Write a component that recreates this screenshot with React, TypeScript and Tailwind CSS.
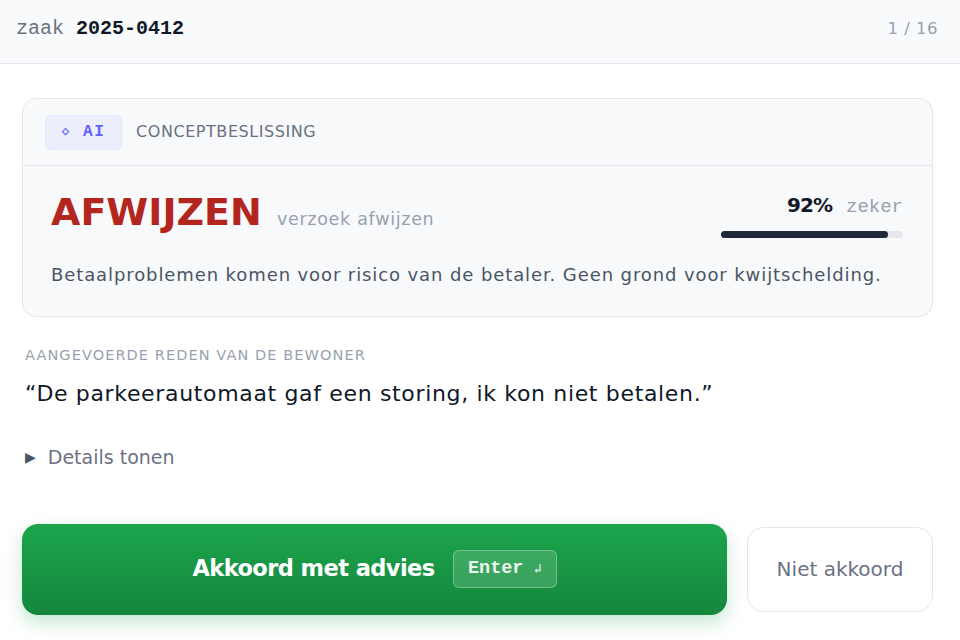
import React from "react";

const sans = "font-['DejaVu_Sans','Noto_Sans',sans-serif]";
const mono = "font-['Liberation_Mono','DejaVu_Sans_Mono',monospace]";

export default function App() {
  return (
    <div className={`h-[640px] w-[960px] overflow-hidden bg-white ${sans}`}>
      <header className="flex h-[64px] items-center justify-between border-b border-gray-200 bg-[#f9fafb] pb-[5px] pl-4 pr-[22px]">
        <div className={`${mono} text-[20px] text-gray-500`}>
          zaak <span className="font-bold text-gray-900">2025-0412</span>
        </div>
        <div className="text-[16.5px] tracking-[0.03em] text-gray-400">1 / 16</div>
      </header>

      <main className="pl-[22px] pr-[27px] pt-[34px]">
        <section className="rounded-[14px] border border-gray-200 bg-[#f8f9fb]">
          <div className="flex h-[67px] items-center gap-[14px] border-b border-gray-200 px-[22px]">
            <span className={`${mono} flex h-[35px] w-[77px] items-center justify-center gap-[12px] rounded-md border border-indigo-100 bg-[#eceffb] text-[16px] font-bold tracking-[0.1em] text-indigo-500`}>
              <span className="text-[13px]">◇</span>AI
            </span>
            <span className="text-[16px] uppercase tracking-[0.035em] text-gray-500">Conceptbeslissing</span>
          </div>
          <div className="pb-[28px] pl-[28px] pr-[29px] pt-[26px]">
            <div className="flex items-start justify-between">
              <div className="flex items-baseline gap-[15px]">
                <span className="text-[38px] font-bold leading-[40px] text-[#b3261e]">AFWIJZEN</span>
                <span className="text-[17.5px] tracking-[0.04em] text-gray-400">verzoek afwijzen</span>
              </div>
              <div className="mt-[-2px] flex w-[182px] flex-col items-end">
                <div className="flex items-baseline gap-[14px]">
                  <span className="text-[20px] font-bold tracking-[-0.05em] text-gray-900">92%</span>
                  <span className={`${mono} text-[19px] text-gray-400`}>zeker</span>
                </div>
                <div className="mt-[9px] h-[7px] w-full rounded-full bg-gray-200">
                  <div className="h-full rounded-full bg-[#1f2937]" style={{ width: "92%" }} />
                </div>
              </div>
            </div>
            <p className="mt-[23px] text-[18px] tracking-[0.05em] text-gray-600">
              Betaalproblemen komen voor risico van de betaler. Geen grond voor kwijtschelding.
            </p>
          </div>
        </section>

        <div className="mt-[28px] pl-[3px]">
          <div className="text-[14.5px] uppercase tracking-[0.075em] text-gray-400">Aangevoerde reden van de bewoner</div>
          <p className="mt-[11px] text-[22px] tracking-[0.03em] text-gray-900">
            “De parkeerautomaat gaf een storing, ik kon niet betalen.”
          </p>
          <div className="mt-[33px] flex items-center gap-[12px] text-[19px] text-gray-500">
            <span className="text-[14px] text-gray-600">▶</span>Details tonen
          </div>
        </div>

        <div className="mt-[52px] flex items-center gap-[20px]">
          <button className="flex h-[91px] flex-1 items-center justify-center gap-[18px] rounded-[16px] bg-gradient-to-b from-[#1ca54c] to-[#15873d] shadow-[0_8px_18px_rgba(22,163,74,0.25)]">
            <span className="text-[22.5px] font-bold tracking-[-0.025em] text-white">Akkoord met advies</span>
            <span className={`${mono} flex h-[38px] w-[104px] items-center justify-center gap-[10px] rounded-md border border-white/30 bg-white/15 text-[18.5px] font-bold text-white/90`}>
              Enter <span className="text-[13px] font-normal">↲</span>
            </span>
          </button>
          <button className="h-[85px] w-[186px] rounded-[16px] border border-gray-200 bg-white text-[20px] text-gray-500">
            Niet akkoord
          </button>
        </div>
      </main>
    </div>
  );
}
